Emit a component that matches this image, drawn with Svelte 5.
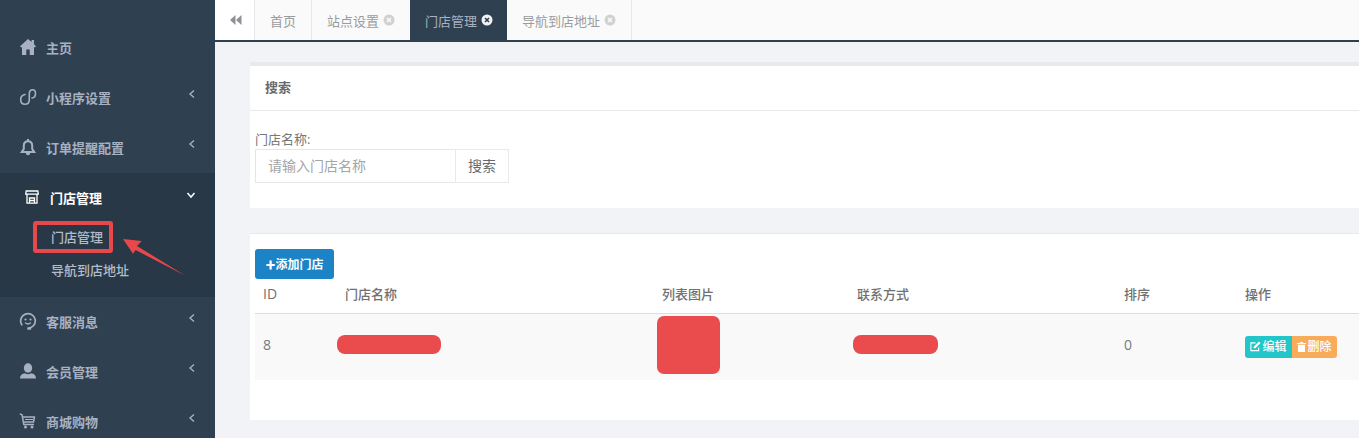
<script lang="ts">
  type NavItem = { label: string; icon: string; open?: boolean; children?: string[] };

  const navTop: NavItem[] = [
    { label: '主页', icon: 'home' },
    { label: '小程序设置', icon: 'link', children: [] },
    { label: '订单提醒配置', icon: 'bell', children: [] }
  ];
  const navBottom: NavItem[] = [
    { label: '客服消息', icon: 'chat', children: [] },
    { label: '会员管理', icon: 'user', children: [] },
    { label: '商城购物', icon: 'cart', children: [] }
  ];
  const tabs = [
    { label: '首页', close: false, active: false },
    { label: '站点设置', close: true, active: false },
    { label: '门店管理', close: true, active: true },
    { label: '导航到店地址', close: true, active: false }
  ];
</script>

{#snippet icon(name: string)}
  <svg class="navIcon" viewBox="0 0 18 18" width="18" height="18" aria-hidden="true">
    {#if name === 'home'}
      <path fill="currentColor" d="M9 1 12.600 4V2H15V6.200L17.200 8.500 15 9.500V17H10.700V11.500H7.300V17H3V9.500L.8 8.500z" />
    {:else if name === 'link'}
      <path fill="none" stroke="currentColor" stroke-width="1.600" stroke-linecap="round" d="M6 6.500C3.500 7 1.700 9 1.700 11.500 1.700 14.500 3.500 16.300 6 16.300 8.500 16.300 10.300 14.500 10.300 11.500V6C10.300 3.500 11.500 1.700 13.700 1.700 15.500 1.700 16.500 3.500 16.500 5.500 16.500 8 15.200 9.800 13 10" />
    {:else if name === 'bell'}
      <path fill="none" stroke="currentColor" stroke-width="2" d="M9 3.200c-2.700 0-4.200 2-4.200 4.500v3.200L2.800 14h12.400l-2-3.100V7.700c0-2.500-1.500-4.500-4.200-4.500z" />
      <path fill="currentColor" d="M8 1h2v2.200H8zM6.800 15h4.400a2.200 2.200 0 0 1-4.400 0z" />
    {:else if name === 'chat'}
      <path fill="none" stroke="currentColor" stroke-width="1.700" stroke-linecap="round" d="M2.800 12.800A7.300 7.300 0 1 1 9 16.200M9 16.800h2.500" />
      <circle cx="6.500" cy="7.500" r="1.100" fill="currentColor" />
      <circle cx="11.500" cy="7.500" r="1.100" fill="currentColor" />
      <path fill="none" stroke="currentColor" stroke-width="1.400" stroke-linecap="round" d="M6.500 11c1.300 1 3.700 1 5 0" />
    {:else if name === 'user'}
      <ellipse cx="9" cy="6" rx="4.200" ry="4.700" fill="currentColor" />
      <path fill="currentColor" d="M1 16.500c0-3.300 2.500-5 5-5.200 1.800 1.200 4.200 1.200 6 0 2.500.2 5 1.900 5 5.200z" />
    {:else if name === 'cart'}
      <path fill="none" stroke="currentColor" stroke-width="1.500" stroke-linejoin="round" d="M.8 2 3 2.600 4.800 12.500H15M4 5h11.500l-1 5H5" />
      <path fill="none" stroke="currentColor" stroke-width="1" d="M6 7.500h8" />
      <circle cx="6.500" cy="15" r="1.500" fill="currentColor" />
      <circle cx="13" cy="15" r="1.500" fill="currentColor" />
    {/if}
  </svg>
{/snippet}

{#snippet navRow(item: NavItem)}
  <div class="navRow">
    {@render icon(item.icon)}
    <span class="navLabel">{item.label}</span>
    {#if item.children}
      <svg class="chev" viewBox="0 0 8 10" width="8" height="10" aria-hidden="true">
        <path d="M6 1.500 2 5l4 3.500" fill="none" stroke="currentColor" stroke-width="1.400" />
      </svg>
    {/if}
  </div>
{/snippet}

<div class="page">
  <aside class="sidebar">
    {#each navTop as item}
      {@render navRow(item)}
    {/each}

    <div class="openGroup">
      <div class="openHead">
        <svg class="storeIcon" viewBox="0 0 14 14" width="14" height="14" aria-hidden="true">
          <path fill="none" stroke="currentColor" stroke-width="1.300" d="M1.200 1h11.600l.5 3.200H.7zM2 4.200v9h10v-9M4.500 13.200V8h5v5.200M4.500 10.500h5" />
        </svg>
        <span>门店管理</span>
        <svg class="chevDown" viewBox="0 0 10 8" width="10" height="8" aria-hidden="true">
          <path d="M1.500 2 5 6l3.500-4" fill="none" stroke="currentColor" stroke-width="1.500" />
        </svg>
      </div>
      <div class="subItem first">门店管理</div>
      <div class="subItem">导航到店地址</div>
    </div>

    {#each navBottom as item}
      {@render navRow(item)}
    {/each}

    <!-- annotation drawn over the menu -->
    <div class="markBox"></div>
    <svg class="markArrow" viewBox="0 0 70 46" width="70" height="46" aria-hidden="true">
      <path fill="#e8484b" d="M1 2 19.700 4 15 9 63 38.500 13.500 13 11 16.700z" />
    </svg>
  </aside>

  <main class="main">
    <nav class="tabBar">
      <div class="collapse">
        <svg viewBox="0 0 12 10" width="12" height="10" aria-hidden="true">
          <path fill="#8d9196" d="M5.500 0v10L0 5zM11.500 0v10L6 5z" />
        </svg>
      </div>
      {#each tabs as tab}
        <div class="tab" class:active={tab.active}>
          {tab.label}
          {#if tab.close}
            <svg class="close" viewBox="0 0 12 12" width="12" height="12" aria-hidden="true">
              <circle cx="6" cy="6" r="5.500" fill="currentColor" />
              <path d="M4 4l4 4M8 4l-4 4" stroke="var(--x)" stroke-width="1.600" />
            </svg>
          {/if}
        </div>
      {/each}
    </nav>

    <div class="content">
      <section class="card searchCard">
        <h5 class="cardTitle">搜索</h5>
        <div class="searchBody">
          <div class="fieldLabel">门店名称:</div>
          <div class="inputGroup">
            <input class="input" placeholder="请输入门店名称" />
            <button class="searchBtn">搜索</button>
          </div>
        </div>
      </section>

      <section class="card listCard">
        <button class="addBtn"><span class="plus">✚</span>添加门店</button>
        <table class="table">
          <colgroup>
            <col style="width: 82px" />
            <col style="width: 317px" />
            <col style="width: 195px" />
            <col style="width: 267px" />
            <col style="width: 121px" />
            <col />
          </colgroup>
          <thead>
            <tr>
              <th class="latin">ID</th>
              <th>门店名称</th>
              <th>列表图片</th>
              <th>联系方式</th>
              <th>排序</th>
              <th>操作</th>
            </tr>
          </thead>
          <tbody>
            <tr>
              <td class="latin">8</td>
              <td class="flush"><div class="redact nameBlock"></div></td>
              <td class="picCell"><div class="redact picBlock"></div></td>
              <td class="contactCell"><div class="redact contactBlock"></div></td>
              <td class="latin">0</td>
              <td>
                <div class="actions">
                  <span class="action edit">
                    <svg viewBox="0 0 12 12" width="11" height="11" aria-hidden="true">
                      <path fill="none" stroke="currentColor" stroke-width="1.200" d="M9.500 7v3.500h-8.500V2H6" />
                      <path fill="currentColor" d="M4 6.200 9.800.6l1.700 1.700L5.800 8H4z" />
                    </svg>编辑
                  </span>
                  <span class="action del">
                    <svg viewBox="0 0 9 10" width="9" height="10" aria-hidden="true">
                      <path fill="currentColor" d="M3 0h3v1h3v1.200H0V1h3zM1 3h7v7H1z" />
                    </svg>删除
                  </span>
                </div>
              </td>
            </tr>
          </tbody>
        </table>
      </section>
    </div>
  </main>
</div>

<style>
  :global(body) {
    margin: 0;
    overflow: hidden;
  }

  .page {
    display: flex;
    width: 1359px;
    height: 438px;
    overflow: hidden;
    background: #f2f3f6;
    color: #676a6c;
    font-family: 'Open Sans', 'Noto Sans CJK SC', sans-serif;
    font-size: 13px;
  }

  .sidebar {
    position: relative;
    flex: 0 0 215px;
    padding-top: 23px;
    background: #2f4050;
    color: #a7b1c2;
  }

  .navRow {
    display: flex;
    align-items: center;
    box-sizing: border-box;
    height: 50px;
    padding: 0 0 2px 19px;
    font-weight: 600;
  }

  .navIcon {
    flex: none;
    margin-right: 9px;
    color: #a7b1c2;
  }

  .navLabel {
    flex: 1;
  }

  .chev {
    margin-right: 19px;
    margin-top: -6px;
  }

  .openGroup {
    height: 124px;
    background: #293846;
  }

  .openHead {
    display: flex;
    align-items: center;
    box-sizing: border-box;
    height: 50px;
    padding: 0 0 2px 25px;
    color: #fff;
    font-weight: 700;
  }

  .storeIcon {
    margin-right: 11px;
  }

  .openHead span {
    flex: 1;
  }

  .chevDown {
    margin-right: 19px;
    margin-top: -4px;
  }

  .subItem {
    height: 32px;
    line-height: 30px;
    padding-left: 51px;
    font-weight: 500;
    color: #b4bccb;
  }

  .subItem.first {
    margin-top: -1px;
    height: 33px;
    line-height: 31px;
  }

  .markBox {
    position: absolute;
    left: 33px;
    top: 221px;
    width: 72px;
    height: 24px;
    border: 4px solid #e8484b;
    border-radius: 3px;
  }

  .markArrow {
    position: absolute;
    left: 122px;
    top: 237px;
  }

  .main {
    flex: 1;
    min-width: 0;
  }

  .tabBar {
    display: flex;
    height: 40px;
    background: #fafafa;
    border-bottom: 2px solid #2f4050;
  }

  .collapse {
    display: flex;
    align-items: center;
    justify-content: center;
    width: 36px;
    padding-left: 3px;
    background: #fff;
    border-right: 1px solid #e7eaec;
  }

  .tab {
    display: flex;
    align-items: center;
    gap: 4px;
    padding: 0 15px;
    border-right: 1px solid #e7eaec;
    color: #999c9e;
  }

  .tab.active {
    margin-left: -1px;
    padding-right: 14px;
    background: #2f4050;
    border-right: 0;
    color: #a7b1c2;
  }

  .close {
    color: #cfd1d3;
    --x: #fafafa;
  }

  .tab.active .close {
    color: #f1f2f4;
    --x: #2f4050;
  }

  .content {
    padding: 20px 0 0 35px;
  }

  .card {
    background: #fff;
  }

  .searchCard {
    height: 142px;
    border-top: 4px solid #e7eaec;
  }

  .cardTitle {
    margin: 0;
    height: 45px;
    line-height: 42px;
    padding-left: 15px;
    border-bottom: 1px solid #e7eaec;
    box-sizing: border-box;
    font-size: 13px;
    font-weight: 600;
    color: #676a6c;
  }

  .searchBody {
    padding: 19px 5px 0;
  }

  .fieldLabel {
    height: 19px;
    line-height: 18px;
    color: #757779;
  }

  .inputGroup {
    display: flex;
  }

  .input {
    box-sizing: border-box;
    width: 201px;
    height: 34px;
    padding: 0 12px 2px;
    border: 1px solid #e5e6e7;
    outline: 0;
    background: #fff;
    font: inherit;
    font-size: 14px;
    color: #676a6c;
  }

  .input::placeholder {
    color: #a3a5a7;
  }

  .searchBtn {
    box-sizing: border-box;
    width: 54px;
    height: 34px;
    margin-left: -1px;
    padding: 0 0 2px;
    border: 1px solid #e7eaec;
    background: #fff;
    font: inherit;
    font-size: 14px;
    color: #676a6c;
  }

  .listCard {
    box-sizing: border-box;
    margin-top: 25px;
    height: 187px;
    padding: 15px 0 0 5px;
    border-top: 1px solid #e7eaec;
  }

  .addBtn {
    display: block;
    box-sizing: border-box;
    width: 79px;
    height: 30px;
    padding: 0;
    border: 0;
    border-radius: 3px;
    background: #1c84c6;
    color: #fff;
    font: inherit;
    font-size: 12px;
    font-weight: 600;
  }

  .plus {
    font-size: 10px;
  }

  .table {
    width: 1104px;
    table-layout: fixed;
    border-collapse: collapse;
    margin-top: 1px;
  }

  th {
    box-sizing: border-box;
    height: 33px;
    padding: 0 8px 5px;
    text-align: left;
    font-weight: 500;
    border-bottom: 1px solid #dddddd;
    color: #6f7173;
  }

  td {
    box-sizing: border-box;
    height: 67px;
    padding: 0 8px 4px;
    background: #f9f9f9;
    color: #767a7c;
  }

  .latin {
    font-size: 14px;
  }

  td.flush {
    padding-left: 0;
  }

  .redact {
    background: #ea4b4d;
  }

  .nameBlock {
    width: 104px;
    height: 19px;
    border-radius: 8px;
  }

  td.picCell {
    padding-left: 3px;
  }

  .picBlock {
    width: 63px;
    height: 58px;
    border-radius: 7px;
  }

  td.contactCell {
    padding-left: 4px;
  }

  .contactBlock {
    width: 85px;
    height: 19px;
    border-radius: 8px;
  }

  .actions {
    display: flex;
    margin-top: 4px;
    font-size: 12px;
    font-weight: 500;
    line-height: 22px;
    color: #fff;
  }

  .action {
    display: flex;
    align-items: center;
    justify-content: center;
    box-sizing: border-box;
    height: 22px;
    gap: 1px;
  }

  .edit {
    width: 47px;
    background: #23c6c8;
    border-radius: 3px 0 0 3px;
  }

  .del {
    width: 45px;
    background: #f8ac59;
    border-radius: 0 3px 3px 0;
  }
</style>
